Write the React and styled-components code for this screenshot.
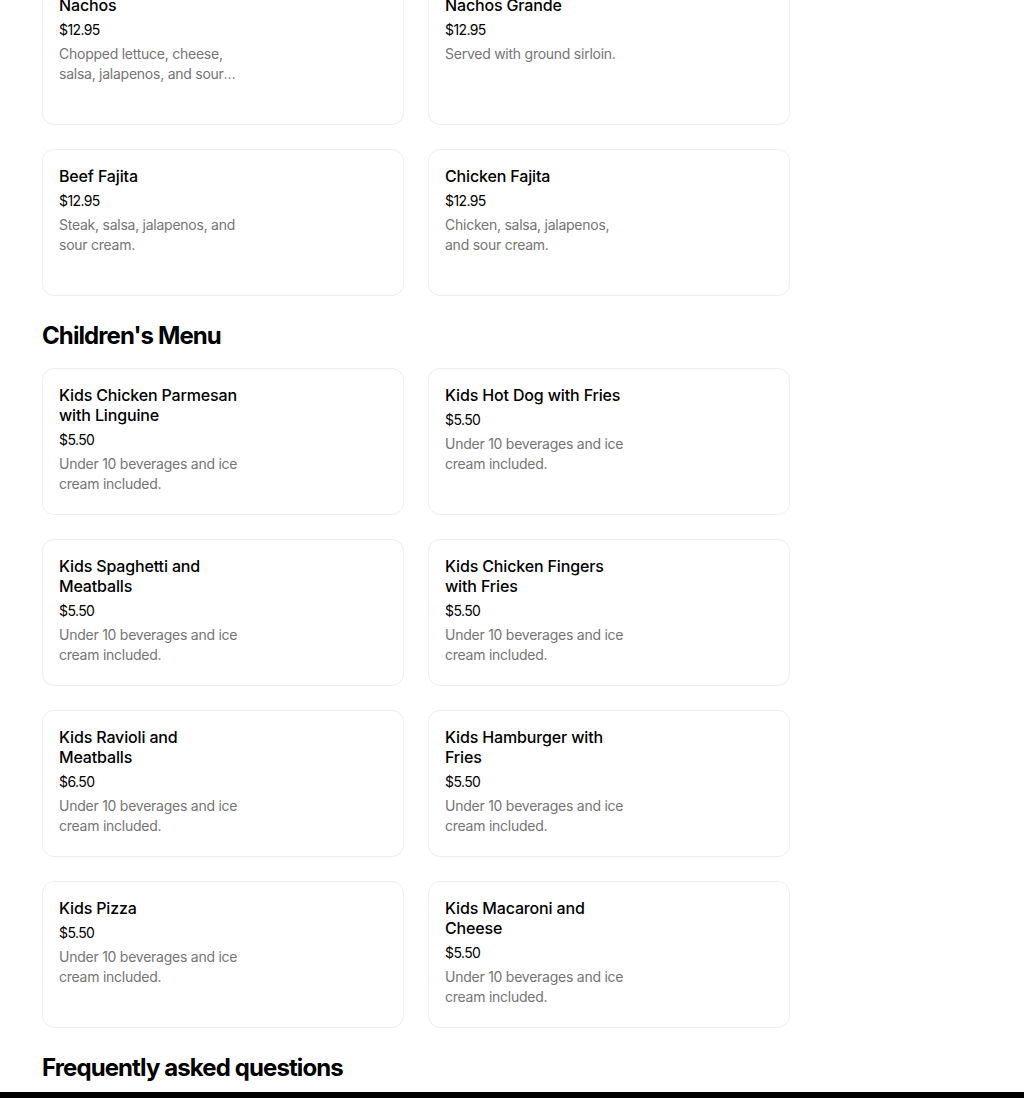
import React from 'react'
import styled, { createGlobalStyle } from 'styled-components'

const GlobalStyle = createGlobalStyle`
    * {
        box-sizing: border-box;
    }

    body {
        margin: 0;
        background: #fff;
        font-family: Inter, "Noto Sans", Arial, sans-serif;
        color: #000;
        overflow: hidden;
    }
`

const sections = [
    {
        title: null,
        items: [
            { name: 'Nachos', price: '$12.95', desc: 'Chopped lettuce, cheese, salsa, jalapenos, and sour cream.' },
            { name: 'Nachos Grande', price: '$12.95', desc: 'Served with ground sirloin.' },
            { name: 'Beef Fajita', price: '$12.95', desc: 'Steak, salsa, jalapenos, and sour cream.' },
            { name: 'Chicken Fajita', price: '$12.95', desc: 'Chicken, salsa, jalapenos, and sour cream.' },
        ],
    },
    {
        title: "Children's Menu",
        items: [
            { name: 'Kids Chicken Parmesan with Linguine', price: '$5.50', desc: 'Under 10 beverages and ice cream included.' },
            { name: 'Kids Hot Dog with Fries', price: '$5.50', desc: 'Under 10 beverages and ice cream included.' },
            { name: 'Kids Spaghetti and Meatballs', price: '$5.50', desc: 'Under 10 beverages and ice cream included.' },
            { name: 'Kids Chicken Fingers with Fries', price: '$5.50', desc: 'Under 10 beverages and ice cream included.' },
            { name: 'Kids Ravioli and Meatballs', price: '$6.50', desc: 'Under 10 beverages and ice cream included.' },
            { name: 'Kids Hamburger with Fries', price: '$5.50', desc: 'Under 10 beverages and ice cream included.' },
            { name: 'Kids Pizza', price: '$5.50', desc: 'Under 10 beverages and ice cream included.' },
            { name: 'Kids Macaroni and Cheese', price: '$5.50', desc: 'Under 10 beverages and ice cream included.' },
        ],
    },
]

function App() {
    return (
        <>
            <GlobalStyle />
            <Page>
                {sections.map((section, i) => (
                    <section key={i}>
                        {section.title && <SectionTitle>{section.title}</SectionTitle>}
                        <Grid>
                            {section.items.map((item) => (
                                <Card key={item.name}>
                                    <TextCol>
                                        <ItemName>{item.name}</ItemName>
                                        <Price>{item.price}</Price>
                                        <Desc>{item.desc}</Desc>
                                    </TextCol>
                                </Card>
                            ))}
                        </Grid>
                    </section>
                ))}
                <SectionTitle $last>Frequently asked questions</SectionTitle>
            </Page>
            <Footer />
        </>
    )
}

const Page = styled.main`
    margin-top: -22px;
    padding: 0 42px;
`

const SectionTitle = styled.h2`
    margin: 24px 0 ${(p) => (p.$last ? '8px' : '16px')};
    font-size: 24px;
    line-height: 32px;
    font-weight: 700;
    letter-spacing: -0.9px;
`

const Grid = styled.div`
    display: grid;
    grid-template-columns: 362px 362px;
    gap: 24px;
`

const Card = styled.div`
    height: 147px;
    padding: 16px;
    border: 1px solid #eeeeee;
    border-radius: 12px;
    background: #fff;
    display: flex;
`

const TextCol = styled.div`
    width: 182px;
    display: flex;
    flex-direction: column;
    gap: 4px;
`

const ItemName = styled.div`
    font-size: 16px;
    line-height: 20px;
    font-weight: 500;
    letter-spacing: -0.15px;
    color: #000;
`

const Price = styled.div`
    margin-top: 1px;
    font-size: 14px;
    line-height: 20px;
    color: #000;
    letter-spacing: -0.6px;
`

const Desc = styled.div`
    font-size: 14px;
    line-height: 20px;
    color: #757575;
    letter-spacing: -0.25px;
    display: -webkit-box;
    -webkit-line-clamp: 2;
    -webkit-box-orient: vertical;
    overflow: hidden;
`

const Footer = styled.div`
    height: 40px;
    background: #000;
`

export default App
